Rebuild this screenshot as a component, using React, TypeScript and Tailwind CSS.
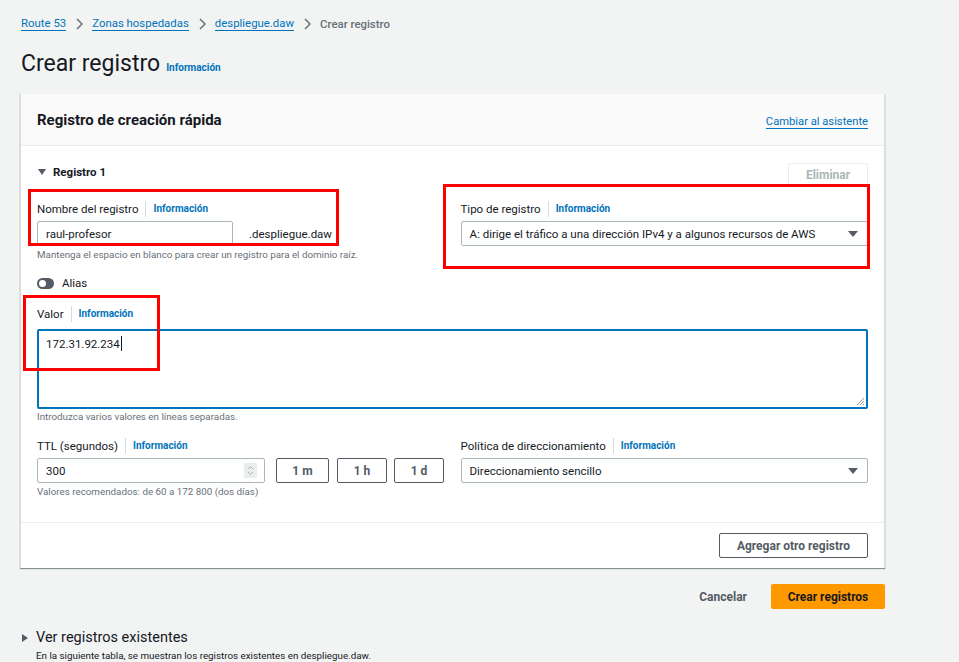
import React from "react";

const Info = () => (
  <span className="flex items-center">
    <span className="mx-[7px] h-[16px] w-px bg-[#d5dbdb]" />
    <span className="text-[10px] font-bold leading-[12px] text-[#0073bb]">Información</span>
  </span>
);

const Label = ({ children }: { children: React.ReactNode }) => (
  <div className="flex h-[18px] items-center text-[11.5px] leading-[18px] text-[#16191f]">
    <span>{children}</span>
    <Info />
  </div>
);

const Caret = () => (
  <svg width="12" height="8" viewBox="0 0 12 8" className="shrink-0">
    <path d="M1 1h10L6 7z" fill="#545b64" />
  </svg>
);

const Chevron = () => (
  <svg width="8" height="12" viewBox="0 0 8 12" className="mx-[9px]">
    <path d="M2 1l5 5-5 5" stroke="#687078" strokeWidth="1.5" fill="none" />
  </svg>
);

export default function App() {
  return (
    <div
      className="relative min-h-[662px] w-[959px] bg-[#f2f3f3] pl-[20px] pt-[16px] text-[#16191f]"
      style={{ fontFamily: "Roboto, 'Liberation Sans', sans-serif" }}
    >
      {/* breadcrumb */}
      <div className="flex h-[16px] items-center pl-px text-[11.4px] leading-[13px]">
        <span className="border-b border-[#0073bb] text-[#0073bb]">Route 53</span>
        <Chevron />
        <span className="border-b border-[#0073bb] text-[#0073bb]">Zonas hospedadas</span>
        <Chevron />
        <span className="border-b border-[#0073bb] text-[#0073bb]">despliegue.daw</span>
        <Chevron />
        <span className="font-medium text-[#687078]">Crear registro</span>
      </div>

      {/* title */}
      <div className="mt-[17px] flex h-[30px] items-end pl-px">
        <h1 className="text-[23px] leading-[30px]">Crear registro</h1>
        <span className="mb-[5px] ml-[6px] text-[10px] font-bold leading-[12px] text-[#0073bb]">Información</span>
      </div>

      {/* card */}
      <div className="mt-[15px] w-[865px] border-x border-[#d5dbdb] bg-white shadow-[0_1px_1px_0_rgba(0,28,36,0.45)]">
        <div className="flex h-[52px] items-center justify-between border-b border-[#eaeded] bg-[#fafafa] px-4">
          <h2 className="text-[15px] font-bold leading-[18px]">Registro de creación rápida</h2>
          <span className="mt-[4px] border-b border-[#0073bb] text-[11.2px] leading-[13px] text-[#0073bb]">Cambiar al asistente</span>
        </div>

        <div className="px-4 pt-[17px]">
          <div className="flex h-[24px] items-start justify-between">
            <div className="flex h-[18px] items-center gap-[6px] text-[11.5px] font-bold leading-[18px]">
              <svg width="10" height="8" viewBox="0 0 10 8"><path d="M1 1h8L5 7z" fill="#545b64" /></svg>
              <span>Registro 1</span>
            </div>
            <div className="flex h-[24px] w-[80px] items-center justify-center rounded-[2px] border border-[#eaeded] bg-white text-[12px] font-bold leading-[14px] text-[#aab7b8]">
              Eliminar
            </div>
          </div>

          <div className="mt-[13px] grid grid-cols-2 gap-x-4">
            <div>
              <Label>Nombre del registro</Label>
              <div className="mt-[3px] flex items-center">
                <div className="flex h-[25px] w-[196px] items-center rounded-[2px] border border-[#aab7b8] px-[8px] text-[11.5px] leading-[14px]">
                  raul-profesor
                </div>
                <span className="ml-[16px] text-[11.5px] leading-[14px]">.despliegue.daw</span>
              </div>
              <div className="mt-[3px] text-[9.8px] leading-[12px] text-[#687078]">
                Mantenga el espacio en blanco para crear un registro para el dominio raíz.
              </div>
            </div>
            <div>
              <Label>Tipo de registro</Label>
              <div className="mt-[3px] flex h-[25px] items-center justify-between rounded-[2px] border border-[#aab7b8] px-[8px] text-[11.5px] leading-[14px]">
                <span>A: dirige el tráfico a una dirección IPv4 y a algunos recursos de AWS</span>
                <Caret />
              </div>
            </div>
          </div>

          <div className="mt-[15px] flex h-[14px] items-center gap-[8px]">
            <span className="relative h-[11px] w-[17px] rounded-full bg-[#545b64]">
              <span className="absolute left-[2px] top-[2px] h-[7px] w-[7px] rounded-full bg-white" />
            </span>
            <span className="text-[11.5px] leading-[14px]">Alias</span>
          </div>

          <div className="mt-[15px]">
            <Label>Valor</Label>
            <div className="relative mt-[6px] h-[80px] rounded-[2px] border-2 border-[#0073bb] px-[7px] pt-[2px] text-[11.5px] leading-[14px]">
              <span>172.31.92.234</span>
              <span className="ml-px inline-block h-[15px] w-px translate-y-[3px] bg-[#16191f]" />
              <svg width="10" height="10" viewBox="0 0 10 10" className="absolute bottom-[1px] right-[1px]">
                <path d="M9 2L2 9M9 5L5 9M9 8L8 9" stroke="#8d9496" strokeWidth="1" />
              </svg>
            </div>
            <div className="mt-[2px] text-[9.8px] leading-[12px] text-[#687078]">Introduzca varios valores en líneas separadas.</div>
          </div>

          <div className="mt-[14px] grid grid-cols-2 gap-x-4">
            <div>
              <Label>TTL (segundos)</Label>
              <div className="mt-[3px] flex items-center">
                <div className="flex h-[25px] w-[228px] items-center justify-between rounded-[2px] border border-[#aab7b8] pl-[8px] pr-[7px] text-[11.5px] leading-[14px]">
                  <span>300</span>
                  <span className="flex h-[15px] w-[13px] flex-col items-center justify-center bg-[#eaeded]">
                    <svg width="7" height="11" viewBox="0 0 7 11"><path d="M1 4l2.5-2.5L6 4M1 7l2.5 2.5L6 7" stroke="#aab7b8" fill="none" /></svg>
                  </span>
                </div>
                <div className="ml-[11px] flex h-[25px] w-[53px] items-center justify-center rounded-[2px] border border-[#545b64] text-[12px] font-bold leading-[14px] text-[#545b64]">1 m</div>
                <div className="ml-[8px] flex h-[25px] w-[50px] items-center justify-center rounded-[2px] border border-[#545b64] text-[12px] font-bold leading-[14px] text-[#545b64]">1 h</div>
                <div className="ml-[7px] flex h-[25px] w-[50px] items-center justify-center rounded-[2px] border border-[#545b64] text-[12px] font-bold leading-[14px] text-[#545b64]">1 d</div>
              </div>
              <div className="mt-[3px] text-[9.8px] leading-[12px] text-[#687078]">Valores recomendados: de 60 a 172 800 (dos días)</div>
            </div>
            <div>
              <Label>Política de direccionamiento</Label>
              <div className="mt-[3px] flex h-[25px] items-center justify-between rounded-[2px] border border-[#aab7b8] px-[8px] text-[11.5px] leading-[14px]">
                <span>Direccionamiento sencillo</span>
                <Caret />
              </div>
            </div>
          </div>
        </div>

        <div className="mt-[24px] border-t border-[#eaeded] px-4 pb-[10px] pt-[10px]">
          <div className="flex justify-end">
            <div className="flex h-[25px] w-[149px] items-center justify-center rounded-[2px] border border-[#545b64] text-[12px] font-bold leading-[14px] text-[#545b64]">
              Agregar otro registro
            </div>
          </div>
        </div>
      </div>

      {/* actions */}
      <div className="mt-[16px] flex w-[865px] items-center justify-end">
        <span className="mr-[24px] text-[12px] font-bold leading-[14px] text-[#545b64]">Cancelar</span>
        <div className="flex h-[25px] w-[114px] items-center justify-center rounded-[2px] bg-[#ff9900] text-[12px] font-bold leading-[14px] text-[#16191f]">
          Crear registros
        </div>
      </div>

      {/* existing records */}
      <div className="mt-[19px] flex h-[20px] items-center gap-[7px] pl-px">
        <svg width="8" height="10" viewBox="0 0 8 10"><path d="M1 1v8l6-4z" fill="#545b64" /></svg>
        <span className="text-[14.5px] leading-[20px]">Ver registros existentes</span>
      </div>
      <div className="pl-[16px] pt-px text-[9.8px] leading-[14px]">
        En la siguiente tabla, se muestran los registros existentes en despliegue.daw.
      </div>

      {/* red annotation boxes */}
      <div className="pointer-events-none absolute left-[28px] top-[189px] h-[57px] w-[311px] border-[3px] border-[#ff0000]" />
      <div className="pointer-events-none absolute left-[443px] top-[184px] h-[85px] w-[427px] border-[3px] border-[#ff0000]" />
      <div className="pointer-events-none absolute left-[23px] top-[295px] h-[76px] w-[137px] border-[3px] border-[#ff0000]" />
    </div>
  );
}
